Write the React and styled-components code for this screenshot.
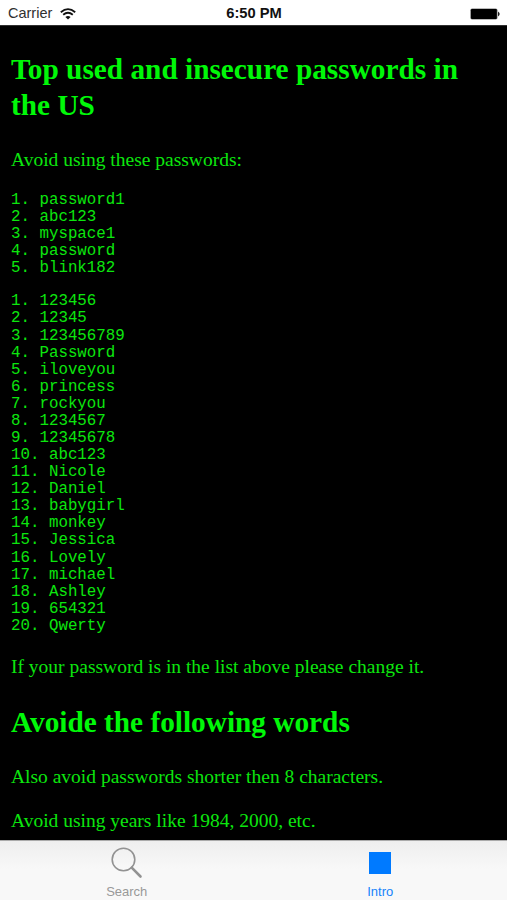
import React from 'react';
import styled, { createGlobalStyle } from 'styled-components';

const GlobalStyle = createGlobalStyle`
  * { box-sizing: border-box; }
  body { margin: 0; background: #000; }
`;

const Screen = styled.main`
  display: flex;
  flex-direction: column;
  width: 507px;
  height: 900px;
  overflow: hidden;
  background: #000;
`;

const StatusBar = styled.header`
  display: grid;
  grid-template-columns: 1fr auto 1fr;
  align-items: center;
  flex: 0 0 26px;
  padding: 2px 7px 0 8px;
  border-bottom: 1px solid #303030;
  background: #fff;
  color: #111;
  font: 14.5px/23px "Liberation Sans", Arial, sans-serif;
`;

const Carrier = styled.div`
  display: flex;
  align-items: center;
  gap: 8px;
`;

const CarrierName = styled.span`
  color: #303030;
`;

const Time = styled.strong`
  font-size: 14.7px;
`;

const Power = styled.div`
  display: flex;
  justify-content: flex-end;
`;

const Article = styled.article`
  flex: 1;
  min-height: 0;
  overflow: hidden;
  padding: 25px 11px 0;
  color: #00f808;
  font-family: "Liberation Serif", "Times New Roman", serif;
`;

const Heading = styled.h1`
  margin: 0;
  font-size: 29.3px;
  line-height: 36px;
  font-weight: 700;
  white-space: pre-line;
`;

const Paragraph = styled.p`
  margin: ${({ $top }) => $top}px 0 0;
  color: #0ce60e;
  font-size: 19.5px;
  line-height: 24px;
`;

const PasswordList = styled.pre`
  margin: ${({ $top }) => $top}px 0 0;
  color: #0ce60e;
  font: 15.8px/17.08px "Liberation Mono", "Courier New", monospace;
`;

const SubHeading = styled(Heading).attrs({ as: 'h2' })`
  margin-top: 25px;
`;

const TabBar = styled.nav`
  display: grid;
  grid-template-columns: 1fr 1fr;
  flex: 0 0 60px;
  border-top: 1px solid #aaa;
  background: linear-gradient(#eee, #f8f8f8 28px);
`;

const Tab = styled.button`
  display: flex;
  flex-direction: column;
  align-items: center;
  gap: 2px;
  border: 0;
  padding: 2px 0 0;
  background: transparent;
  color: ${({ $active }) => ($active ? '#1683fb' : '#999')};
  font: 13px/16px "Liberation Sans", Arial, sans-serif;
`;

const IconSlot = styled.span`
  display: flex;
  align-items: center;
  justify-content: center;
  flex: 0 0 39px;
`;

const Square = styled.span`
  width: 22px;
  height: 22px;
  background: #007aff;
`;

const common = ['password1', 'abc123', 'myspace1', 'password', 'blink182'];
const top20 = ['123456', '12345', '123456789', 'Password', 'iloveyou', 'princess', 'rockyou', '1234567', '12345678', 'abc123', 'Nicole', 'Daniel', 'babygirl', 'monkey', 'Jessica', 'Lovely', 'michael', 'Ashley', '654321', 'Qwerty'];
const numbered = (words) => words.map((word, i) => `${i + 1}. ${word}`).join('\n');

const Wifi = () => (
  <svg width="16" height="12" viewBox="0 0 16 12" fill="none" stroke="#111" strokeWidth="1.8">
    <path d="M.8 4.2Q8-2 15.2 4.2M3.2 6.8Q8 2.8 12.8 6.8" />
    <path d="M5.4 9Q8 6.8 10.6 9L8 11.6Z" fill="#111" stroke="none" />
  </svg>
);

const Battery = () => (
  <svg width="30" height="12" viewBox="0 0 30 12">
    <rect x=".3" y=".4" width="27.2" height="11.2" rx="1.8" fill="#777" />
    <rect x="1" y="1" width="25.8" height="10" rx="1" />
    <path d="M28 3.5Q31.4 6 28 8.5Z" fill="#222" />
  </svg>
);

const Search = () => (
  <svg width="32" height="32" viewBox="0 0 32 32" fill="none" stroke="#929292">
    <circle cx="12.5" cy="12.5" r="11.3" strokeWidth="1.6" />
    <path d="M20.7 20.7L29.5 29.5" strokeWidth="2.6" strokeLinecap="round" />
  </svg>
);

export default function App() {
  return (
    <Screen>
      <GlobalStyle />
      <StatusBar>
        <Carrier><CarrierName>Carrier</CarrierName><Wifi /></Carrier>
        <Time>6:50 PM</Time>
        <Power><Battery /></Power>
      </StatusBar>
      <Article>
        <Heading>{'Top used and insecure passwords in\nthe US'}</Heading>
        <Paragraph $top={25}>Avoid using these passwords:</Paragraph>
        <PasswordList $top={20}>{numbered(common)}</PasswordList>
        <PasswordList $top={16}>{numbered(top20)}</PasswordList>
        <Paragraph $top={20}>If your password is in the list above please change it.</Paragraph>
        <SubHeading>Avoide the following words</SubHeading>
        <Paragraph $top={25}>Also avoid passwords shorter then 8 characters.</Paragraph>
        <Paragraph $top={20}>Avoid using years like 1984, 2000, etc.</Paragraph>
      </Article>
      <TabBar>
        <Tab><IconSlot><Search /></IconSlot>Search</Tab>
        <Tab $active><IconSlot><Square /></IconSlot>Intro</Tab>
      </TabBar>
    </Screen>
  );
}
